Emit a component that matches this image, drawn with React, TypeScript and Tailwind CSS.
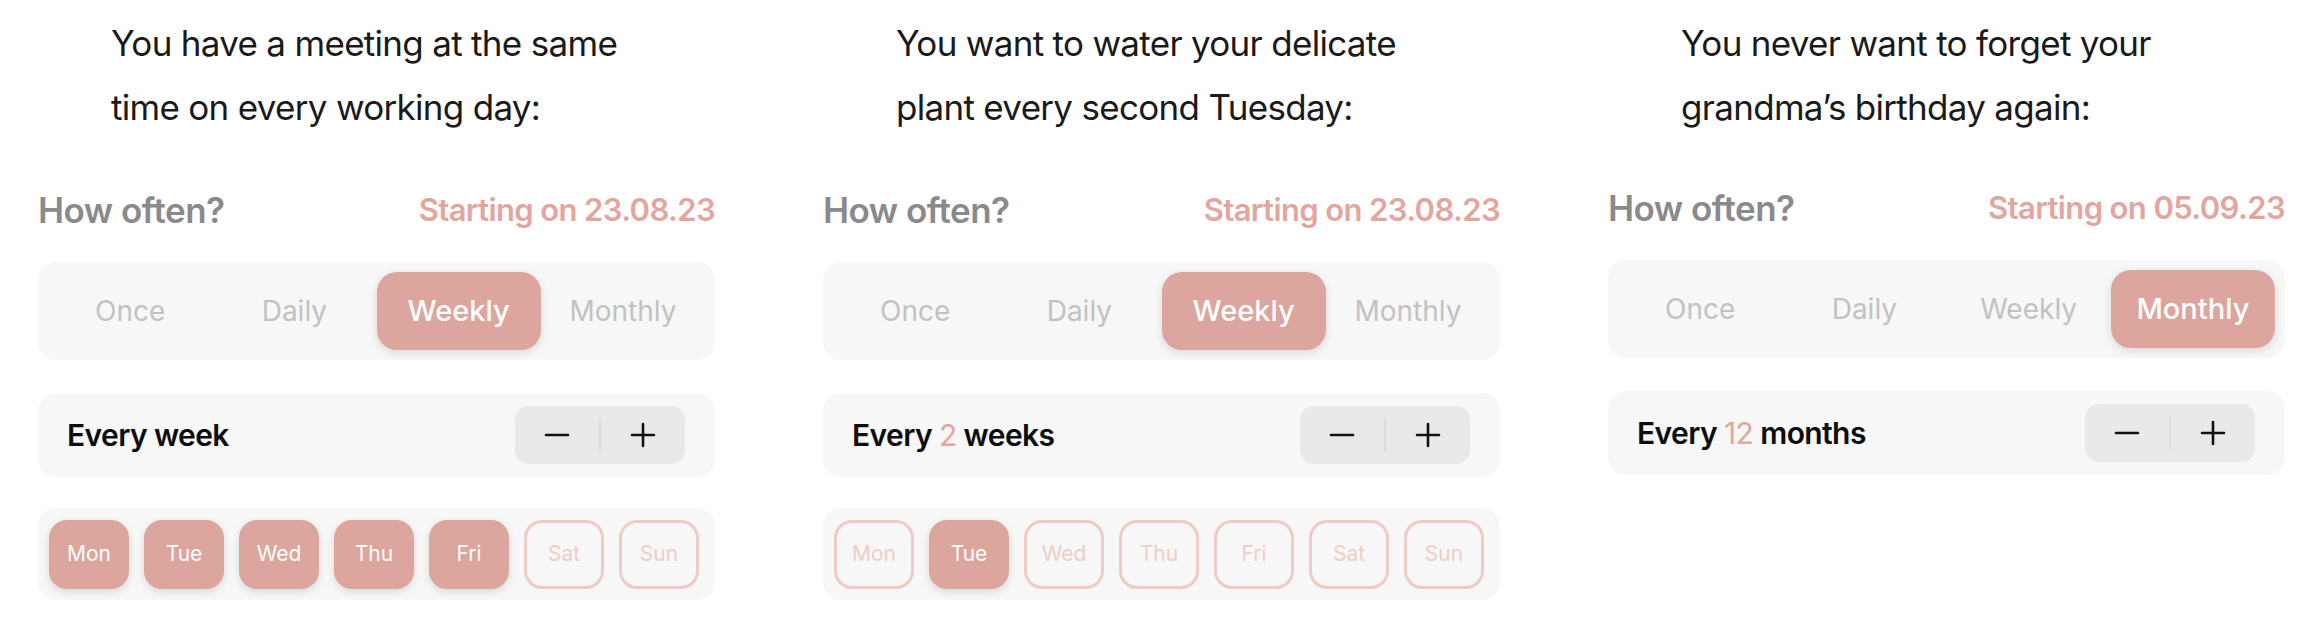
import React from "react";

const PINK = "bg-[#dca59e]";

type Col = {
  heading: [string, string];
  date: string;
  selected: number;
  every: React.ReactNode;
  days?: boolean[];
  lift?: boolean;
};

const OPTIONS = ["Once", "Daily", "Weekly", "Monthly"];
const DAYS = ["Mon", "Tue", "Wed", "Thu", "Fri", "Sat", "Sun"];

function Minus() {
  return (
    <svg width="28" height="28" viewBox="0 0 28 28" fill="none">
      <path d="M3 14h22" stroke="#111" strokeWidth="2.6" strokeLinecap="round" />
    </svg>
  );
}
function Plus() {
  return (
    <svg width="28" height="28" viewBox="0 0 28 28" fill="none">
      <path d="M3 14h22M14 3v22" stroke="#111" strokeWidth="2.6" strokeLinecap="round" />
    </svg>
  );
}

function Column({ c }: { c: Col }) {
  return (
    <div className="w-[677px] flex flex-col shrink-0">
      <div className="pl-[73px] pt-[11px] h-[190px] text-[35px] leading-[64px] tracking-[-0.02em] text-[#1a1a1a]">
        <div>{c.heading[0]}</div>
        <div>{c.heading[1]}</div>
      </div>
      <div className={`${c.lift ? "-mt-[2px]" : ""} flex items-center justify-between h-[40px]`}>
        <span className="text-[35px] font-semibold text-[#8a8a8d] tracking-[-0.015em]">How often?</span>
        <span className="text-[31px] font-semibold text-[#e3a69e] tracking-[-0.02em]">{c.date}</span>
      </div>
      <div className="mt-[32px] h-[98px] rounded-[18px] bg-[#f7f7f7] p-[10px] grid grid-cols-4">
        {OPTIONS.map((o, i) =>
          i === c.selected ? (
            <div
              key={o}
              className={`${PINK} rounded-[20px] flex items-center justify-center text-white text-[29px] font-medium shadow-[0_3px_10px_rgba(0,0,0,0.12)]`}
            >
              {o}
            </div>
          ) : (
            <div key={o} className="flex items-center justify-center text-[#c2c2c2] text-[28px]">
              {o}
            </div>
          )
        )}
      </div>
      <div className="mt-[33px] h-[84px] rounded-[18px] bg-[#f7f7f7] pl-[29px] pr-[30px] flex items-center justify-between">
        <span className="text-[30px] font-semibold text-[#0d0d0d] tracking-[-0.02em]">{c.every}</span>
        <div className="w-[170px] h-[58px] rounded-[14px] bg-[#e9e9e9] flex items-center">
          <div className="flex-1 flex items-center justify-center">
            <Minus />
          </div>
          <div className="w-[2px] h-[34px] bg-[#dcdcdc]" />
          <div className="flex-1 flex items-center justify-center">
            <Plus />
          </div>
        </div>
      </div>
      {c.days && (
        <div className="mt-[31px] h-[92px] rounded-[18px] bg-[#f7f7f7] px-[11px] flex items-center gap-[15px]">
          {DAYS.map((d, i) =>
            c.days![i] ? (
              <div
                key={d}
                className={`${PINK} w-[80px] h-[69px] rounded-[18px] flex items-center justify-center text-white text-[21px] shadow-[0_3px_8px_rgba(0,0,0,0.12)]`}
              >
                {d}
              </div>
            ) : (
              <div
                key={d}
                className="w-[80px] h-[69px] rounded-[18px] border-[3px] border-[#efcbc6] flex items-center justify-center text-[#efcdc8] text-[21px]"
              >
                {d}
              </div>
            )
          )}
        </div>
      )}
    </div>
  );
}

const COLS: Col[] = [
  {
    heading: ["You have a meeting at the same", "time on every working day:"],
    date: "Starting on 23.08.23",
    selected: 2,
    every: "Every week",
    days: [true, true, true, true, true, false, false],
  },
  {
    heading: ["You want to water your delicate", "plant every second Tuesday:"],
    date: "Starting on 23.08.23",
    selected: 2,
    every: (
      <>
        Every <span className="text-[#e3a69e] font-normal">2</span> weeks
      </>
    ),
    days: [false, true, false, false, false, false, false],
  },
  {
    heading: ["You never want to forget your", "grandma’s birthday again:"],
    date: "Starting on 05.09.23",
    selected: 3,
    lift: true,
    every: (
      <>
        Every <span className="text-[#e3a69e] font-normal">12</span> months
      </>
    ),
  },
];

export default function App() {
  return (
    <div
      className="w-[2324px] h-[622px] bg-white flex pl-[38px] gap-[108px] overflow-hidden"
      style={{ fontFamily: "Inter, 'Noto Sans', sans-serif" }}
    >
      {COLS.map((c, i) => (
        <Column key={i} c={c} />
      ))}
    </div>
  );
}
